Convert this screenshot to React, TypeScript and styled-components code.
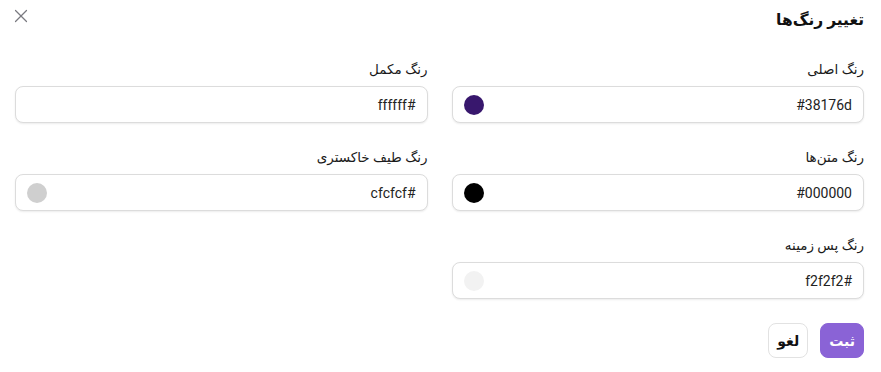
import * as React from 'react'
import styled, { createGlobalStyle } from 'styled-components'
import { X } from 'lucide-react'

const GlobalStyle = createGlobalStyle`
  html, body {
    margin: 0;
    padding: 0;
    background: #ffffff;
  }
  body {
    font-family: Roboto, "DejaVu Sans", "Noto Sans", sans-serif;
    color: #1a1a1a;
  }
`

const Modal = styled.div`
  direction: rtl;
  width: 881px;
  box-sizing: border-box;
  padding: 8px 17px 0 15px;
  display: flex;
  flex-direction: column;
`

const Header = styled.div`
  display: flex;
  align-items: center;
  justify-content: space-between;
  height: 24px;
`

const Title = styled.h2`
  margin: 0;
  font-size: 15.5px;
  font-weight: 700;
  color: #111;
`

const CloseButton = styled.button`
  border: none;
  background: none;
  padding: 0;
  margin-left: -5px;
  margin-top: -8px;
  display: flex;
  color: #7a7a80;
  cursor: pointer;
`

const Grid = styled.div`
  margin-top: 27px;
  display: grid;
  grid-template-columns: 1fr 1fr;
  column-gap: 24px;
  row-gap: 24px;
`

const Field = styled.div`
  display: flex;
  flex-direction: column;
`

const Label = styled.label`
  font-size: 13.5px;
  line-height: 20px;
  margin-bottom: 7px;
  color: #1a1a1a;
`

const InputBox = styled.div`
  height: 37px;
  box-sizing: border-box;
  border: 1px solid #dcdcdc;
  border-radius: 8px;
  box-shadow: 0 1px 2px rgba(0, 0, 0, 0.08);
  display: flex;
  align-items: center;
  justify-content: space-between;
  padding: 0 11px 0 11px;
  background: #fff;
`

const Value = styled.span`
  font-family: Roboto, sans-serif;
  font-size: 14px;
  color: #222;
`

const Swatch = styled.span<{ $color: string }>`
  width: 20px;
  height: 20px;
  border-radius: 50%;
  background: ${(p) => p.$color};
  flex-shrink: 0;
`

const Actions = styled.div`
  margin-top: 24px;
  display: flex;
  gap: 12px;
`

const Button = styled.button<{ $primary?: boolean }>`
  height: 35px;
  padding: 0 8px;
  border-radius: 8px;
  font-family: inherit;
  font-size: 14px;
  font-weight: 700;
  cursor: pointer;
  border: 1px solid ${(p) => (p.$primary ? '#8a63d6' : '#e2e2e2')};
  background: ${(p) => (p.$primary ? '#8a63d6' : '#fff')};
  color: ${(p) => (p.$primary ? '#fff' : '#111')};
`

const fields: { label: string; value: string }[] = [
  { label: 'رنگ اصلی', value: '#38176d' },
  { label: 'رنگ مکمل', value: '#ffffff' },
  { label: 'رنگ متن‌ها', value: '#000000' },
  { label: 'رنگ طیف خاکستری', value: '#cfcfcf' },
  { label: 'رنگ پس زمینه', value: '#f2f2f2' },
]

export default function App() {
  return (
    <>
      <GlobalStyle />
      <Modal>
        <Header>
          <Title>تغییر رنگ‌ها</Title>
          <CloseButton aria-label="بستن">
            <X size={22} strokeWidth={1.3} />
          </CloseButton>
        </Header>
        <Grid>
          {fields.map((f) => (
            <Field key={f.label}>
              <Label>{f.label}</Label>
              <InputBox>
                <Value>{f.value}</Value>
                <Swatch $color={f.value} />
              </InputBox>
            </Field>
          ))}
        </Grid>
        <Actions>
          <Button $primary>ثبت</Button>
          <Button>لغو</Button>
        </Actions>
      </Modal>
    </>
  )
}
